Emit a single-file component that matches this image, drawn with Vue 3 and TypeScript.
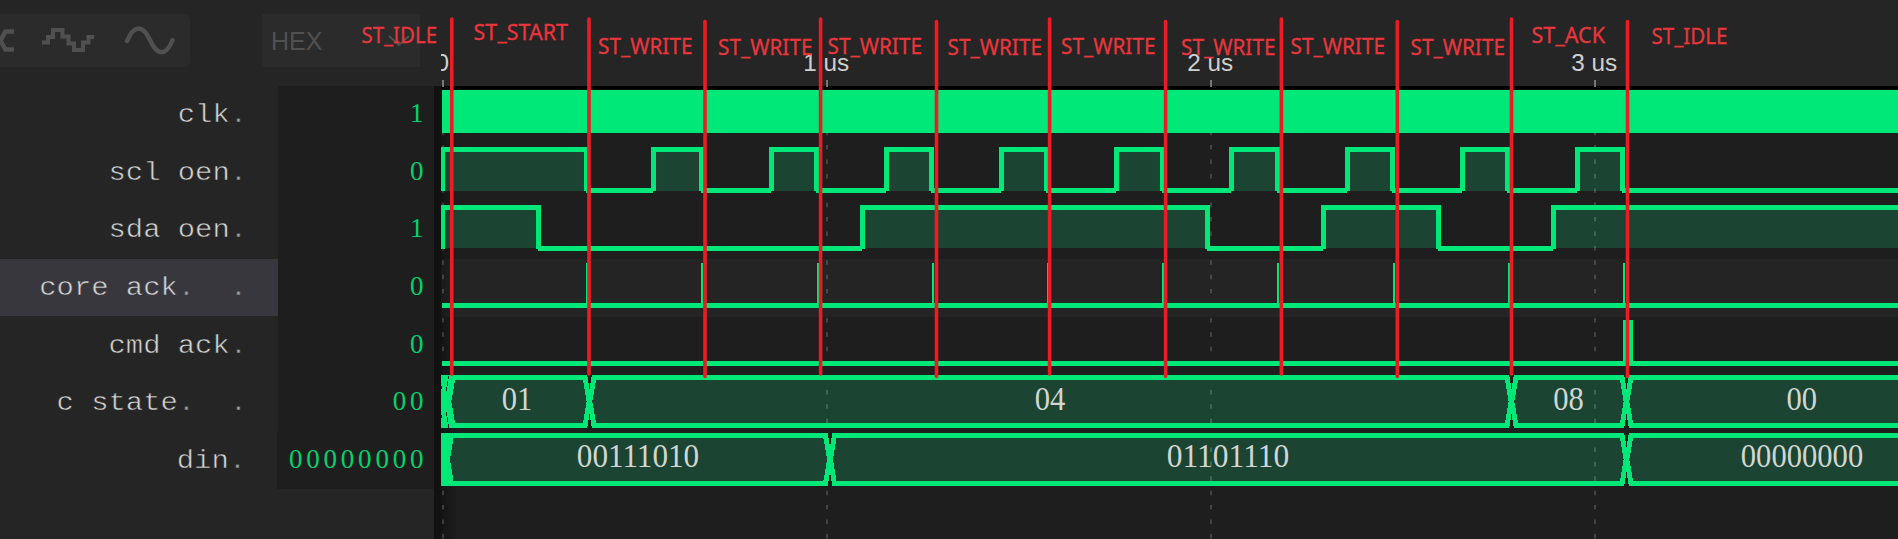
<script setup lang="ts">
interface Signal {
  name: string
  tail: string
  value: string
  selected?: boolean
  wide?: boolean
}
interface BusSegment { from: number; to: number; text: string; cx: number }
interface StateMark { text: string; x: number; y: number; w: number }

const signals: Signal[] = [
  { name: 'clk', tail: '.', value: '1' },
  { name: 'scl oen', tail: '.', value: '0' },
  { name: 'sda oen', tail: '.', value: '1' },
  { name: 'core ack', tail: '.  .', value: '0', selected: true },
  { name: 'cmd ack', tail: '.', value: '0' },
  { name: 'c state', tail: '.  .', value: '00' },
  { name: 'din', tail: '.', value: '00000000', wide: true },
]

const END = 1905
const sclHigh: [number, number][] = [
  [441, 589], [651, 704], [769, 819], [884, 934], [999, 1049], [1114, 1165],
  [1229, 1280], [1345, 1395], [1460, 1510], [1575, 1625],
]
const sdaHigh: [number, number][] = [[441, 541], [860, 1210], [1321, 1441], [1551, END]]
const ackPulses = [586, 701, 817, 932, 1047, 1162, 1277, 1393, 1508, 1623]

function lows(highs: [number, number][]): [number, number][] {
  return highs
    .map((h, i): [number, number] => [h[1] - 3, i + 1 < highs.length ? highs[i + 1][0] + 2 : END])
    .filter(([a, b]) => b > a && a < 1898)
}

function edgePath(highs: [number, number][], top: number): string {
  return highs
    .map(([a, b]) => `M${a} ${top + 44}V${top}H${b}V${top + 44}H${b - 5}V${top + 5}H${a + (a === 441 ? 4 : 5)}V${top + 44}Z`)
    .join('')
}

const digital = [
  { top: 147, highs: sclHigh },
  { top: 205, highs: sdaHigh },
]

const buses: { top: number; segments: BusSegment[] }[] = [
  {
    top: 377.5,
    segments: [
      { from: 448.5, to: 589.5, text: '01', cx: 517 },
      { from: 589.5, to: 1511.5, text: '04', cx: 1050 },
      { from: 1511.5, to: 1626.5, text: '08', cx: 1568.5 },
      { from: 1626.5, to: END, text: '00', cx: 1801.8 },
    ],
  },
  {
    top: 435.5,
    segments: [
      { from: 447, to: 830, text: '00111010', cx: 638 },
      { from: 830, to: 1626.5, text: '01101110', cx: 1228 },
      { from: 1626.5, to: END, text: '00000000', cx: 1802 },
    ],
  },
]

function hexagon(s: BusSegment, top: number): string {
  const l = s.from + 0.3
  const r = s.to - 0.3
  return `M${l + 4.2} ${top}H${r - 4.2}L${r} ${top + 24}L${r - 4.2} ${top + 48}H${l + 4.2}L${l} ${top + 24}Z`
}

const ticks = [
  { x: 443, label: '0' },
  { x: 827, label: '1 us' },
  { x: 1211, label: '2 us' },
  { x: 1595, label: '3 us' },
]

const boundaries = [451.8, 589, 705, 820.6, 936.5, 1049.6, 1165.6, 1281.4, 1397.3, 1511.5, 1627.5]

const marks: StateMark[] = [
  { text: 'ST_IDLE', x: 361.5, y: 43.3, w: 75.5 },
  { text: 'ST_START', x: 473.5, y: 40, w: 94.5 },
  { text: 'ST_WRITE', x: 598, y: 54, w: 94.5 },
  { text: 'ST_WRITE', x: 718, y: 55, w: 94.5 },
  { text: 'ST_WRITE', x: 827.5, y: 54, w: 94.5 },
  { text: 'ST_WRITE', x: 947.5, y: 55, w: 94.5 },
  { text: 'ST_WRITE', x: 1061, y: 54, w: 94.5 },
  { text: 'ST_WRITE', x: 1181, y: 55, w: 94.5 },
  { text: 'ST_WRITE', x: 1290.5, y: 54, w: 94.5 },
  { text: 'ST_WRITE', x: 1410.5, y: 55, w: 94.5 },
  { text: 'ST_ACK', x: 1531.5, y: 42.5, w: 73.5 },
  { text: 'ST_IDLE', x: 1651.5, y: 44, w: 76 },
]
</script>

<template>
  <main class="viewer">
    <header class="toolbar">
      <div class="formats">
        <svg width="190" height="53" viewBox="0 14 190 53">
          <g fill="none" stroke="#505050">
            <path d="M14 31.500H5.500L0.500 40.500L5.500 49.500H14" stroke-width="4.500" />
            <path d="M42 42.500H48V37H53V30H62.500V36.500H68.500V43.500H74V50H83V42.500H88.500V37H94" stroke-width="4" />
            <path d="M127 41C134 24.500 143 24.500 150 40S166 57 172.500 40" stroke-width="4.500" stroke-linecap="round" />
          </g>
        </svg>
      </div>
      <div class="radix">
        <span>HEX</span>
        <svg width="22" height="12" viewBox="0 0 22 12"><path d="M1 1L11 10L21 1" fill="none" stroke="#505050" stroke-width="2" /></svg>
      </div>
    </header>

    <section class="body">
      <div class="signals">
        <div v-for="s in signals" :key="s.name" class="row" :class="{ selected: s.selected, wide: s.wide }">
          <div class="name"><span class="label">{{ s.name }}<i>{{ s.tail }}</i></span></div>
          <div class="value">{{ s.value }}</div>
        </div>
      </div>
      <div class="splitter"></div>
      <div class="waves"><div class="band"></div></div>
    </section>

    <svg class="overlay" width="1898" height="539" viewBox="0 0 1898 539">
      <defs>
        <clipPath id="plot"><rect x="441" y="0" width="1457" height="539" /></clipPath>
      </defs>

      <g clip-path="url(#plot)">
        <rect x="441" y="86" width="1457" height="3.500" fill="#000" />
        <g class="time">
          <text v-for="t in ticks" :key="t.label" :x="t.x - 0.7" y="71.300" text-anchor="middle">{{ t.label }}</text>
        </g>
        <rect v-for="t in ticks" :key="'t' + t.x" :x="t.x - 1" y="80" width="2" height="7" fill="#777" />

        <g fill="#1b4532">
          <template v-for="d in digital" :key="d.top">
            <rect v-for="h in d.highs" :key="h[0]" :x="h[0]" :y="d.top" :width="h[1] - h[0]" :height="d.top === 147 ? 44 : 43" />
          </template>
          <template v-for="b in buses" :key="b.top">
            <path v-for="s in b.segments" :key="s.from" :d="hexagon(s, b.top)" />
          </template>
        </g>

        <path v-for="t in ticks" :key="'g' + t.x" :d="`M${t.x} 130.600V539`" stroke="#fff" stroke-opacity=".17" stroke-width="2" stroke-dasharray="4.600 9.800" />

        <rect x="442" y="90" width="1456" height="43" fill="#00e878" />

        <g fill="#00e878" shape-rendering="crispEdges">
          <template v-for="d in digital" :key="d.top">
            <path :d="edgePath(d.highs, d.top)" />
            <rect v-for="l in lows(d.highs)" :key="l[0]" :x="l[0]" :y="d.top + 41" :width="l[1] - l[0]" height="5" />
          </template>
          <rect v-for="p in ackPulses" :key="p" :x="p" y="263" width="2" height="43" />
          <rect x="442" y="303" width="1456" height="5" />
          <rect x="442" y="361" width="1456" height="5" />
          <rect x="1623" y="320" width="10" height="43" />
        </g>

        <g fill="none" stroke="#00e878" shape-rendering="crispEdges">
          <template v-for="b in buses" :key="b.top">
            <path v-for="s in b.segments" :key="s.from" :d="hexagon(s, b.top)" stroke-width="5" />
            <path :d="`M441 ${b.top - 2.5}H452L449 ${b.top + 24}L452 ${b.top + 50.5}H441Z`" fill="#00e878" stroke="none" />
          </template>
        </g>
        <path d="M448.500 376V379M447.500 381V386M446.500 387V391M446.500 412V416M447.500 417V422M448.500 424V428M441.500 386V389M441.500 415V418" stroke="#1e2a22" stroke-width="1" />

        <g class="bus-text">
          <template v-for="(b, i) in buses" :key="b.top">
            <text
              v-for="s in b.segments"
              :key="s.from"
              :x="s.cx - s.text.length * 7.65"
              :y="i === 0 ? 409.5 : 467.2"
              :textLength="s.text.length * 15.3"
              lengthAdjust="spacingAndGlyphs"
            >{{ s.text }}</text>
          </template>
        </g>
      </g>

      <g stroke="#ed1c24" stroke-width="3.600" stroke-linecap="round">
        <path v-for="(x, i) in boundaries" :key="x" :d="i > 0 && i % 2 === 0 ? `M${x} 21.500V376.500` : `M${x} 19V374`" />
      </g>
      <g class="marks">
        <text v-for="m in marks" :key="m.x" :x="m.x" :y="m.y" :textLength="m.w" lengthAdjust="spacingAndGlyphs">{{ m.text }}</text>
      </g>
    </svg>
  </main>
</template>

<style>
body {
  margin: 0;
  background: #252525;
}
</style>

<style scoped>
.viewer {
  position: relative;
  display: flex;
  flex-direction: column;
  width: 1898px;
  height: 539px;
  overflow: hidden;
  background: #252525;
  font-family: 'Liberation Sans', Arial, sans-serif;
}
.toolbar {
  display: flex;
  gap: 72px;
  height: 72px;
  padding-top: 14px;
}
.formats {
  width: 190px;
  height: 53px;
  border-radius: 0 6px 6px 0;
  background: #2b2b2b;
}
.formats svg {
  display: block;
}
.radix {
  display: flex;
  align-items: center;
  justify-content: space-between;
  box-sizing: border-box;
  width: 158px;
  height: 53px;
  padding: 1px 10px 0 9px;
  background: #2b2b2b;
  color: #505050;
  font-size: 25px;
}
.body {
  display: flex;
  flex: 1;
}
.signals {
  width: 434px;
}
.row {
  display: flex;
  height: 57.600px;
}
.name,
.value {
  display: flex;
  align-items: center;
  justify-content: flex-end;
  box-sizing: border-box;
}
.name {
  width: 278px;
  padding: 2px 30.500px 0 0;
  color: #d4d4d4;
  font-family: 'Liberation Mono', 'Courier New', monospace;
  font-size: 25px;
  white-space: pre;
  -webkit-text-stroke: 0.500px #252525;
}
.label {
  transform: scaleX(1.154);
  transform-origin: right center;
}
.label i {
  color: #a0a0a0;
  font-style: normal;
}
.selected .name {
  background: #38373e;
  -webkit-text-stroke-color: #38373e;
}
.value {
  width: 156px;
  padding: 0 6.700px 2px 0;
  background: #1e1e1e;
  color: #00d26e;
  font-family: 'Liberation Serif', 'Times New Roman', serif;
  font-size: 27px;
  letter-spacing: 3.800px;
}
.wide .name {
  width: 277px;
}
.wide .value {
  width: 157px;
}
.splitter {
  width: 7px;
  background: #111;
}
.waves {
  flex: 1;
  padding-top: 173px;
  background: linear-gradient(90deg, #141414, #1e1e1e 16px);
}
.band {
  height: 58px;
  background: linear-gradient(90deg, #191919, #242424 16px);
}
.overlay {
  position: absolute;
  inset: 0;
}
.time text {
  fill: #d0d0d0;
  font-size: 24.300px;
}
.bus-text text {
  fill: #d2d6d2;
  font-family: 'Liberation Serif', 'Times New Roman', serif;
  font-size: 33.500px;
}
.marks text {
  fill: #e8363c;
  stroke: #e8363c;
  stroke-width: 0.300px;
  font-family: 'Noto Sans', 'Segoe UI', sans-serif;
  font-size: 22px;
}
</style>
